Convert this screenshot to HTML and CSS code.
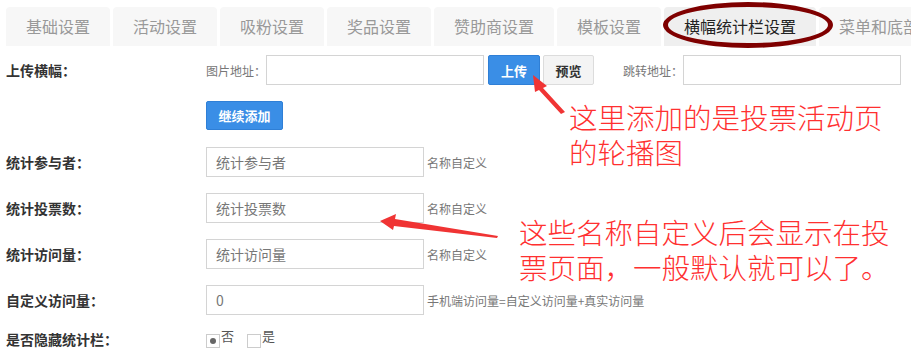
FILE: index.html
```html
<!DOCTYPE html>
<html lang="zh">
<head>
<meta charset="utf-8">
<link rel="stylesheet" href="styles.css">
</head>
<body>
<div class="page">
  <nav class="tabs">
    <div class="tab w104">基础设置</div>
    <div class="tab w104">活动设置</div>
    <div class="tab w104">吸粉设置</div>
    <div class="tab w104">奖品设置</div>
    <div class="tab w120">赞助商设置</div>
    <div class="tab w104">模板设置</div>
    <div class="tab w152 active">横幅统计栏设置</div>
    <div class="tab w120">菜单和底部</div>
  </nav>

  <div class="form">
    <div class="row">
      <div class="label">上传横幅：</div>
      <div class="field">
        <span class="hint-l">图片地址：</span>
        <input class="input" type="text">
        <button class="btn primary">上传</button>
        <button class="btn default">预览</button>
        <span class="hint-l jump">跳转地址：</span>
        <input class="input" type="text">
      </div>
    </div>
    <div class="row">
      <div class="label"></div>
      <div class="field"><button class="btn primary add">继续添加</button></div>
    </div>
    <div class="row">
      <div class="label">统计参与者：</div>
      <div class="field"><input class="input" type="text" value="统计参与者"><span class="hint">名称自定义</span></div>
    </div>
    <div class="row">
      <div class="label">统计投票数：</div>
      <div class="field"><input class="input" type="text" value="统计投票数"><span class="hint">名称自定义</span></div>
    </div>
    <div class="row">
      <div class="label">统计访问量：</div>
      <div class="field"><input class="input" type="text" value="统计访问量"><span class="hint">名称自定义</span></div>
    </div>
    <div class="row">
      <div class="label">自定义访问量：</div>
      <div class="field"><input class="input" type="text" value="0"><span class="hint">手机端访问量=自定义访问量+真实访问量</span></div>
    </div>
    <div class="row last">
      <div class="label">是否隐藏统计栏：</div>
      <div class="field">
        <span class="radio"><span class="dot"></span></span><span class="opt">否</span>
        <span class="radio"></span><span class="opt">是</span>
      </div>
    </div>
  </div>

  <div class="ellipse"></div>
  <svg class="arrows" width="911" height="358" viewBox="0 0 911 358">
    <polygon points="533,75 547,86 543,88 565,112 561,114 539,90 535,92" fill="#f03434"/>
    <polygon points="380,221 396,214 395,219 498,236 497,238 394,226 393,230" fill="#f03434"/>
  </svg>
  <div class="note note1">这里添加的是投票活动页<br>的轮播图</div>
  <div class="note note2">这些名称自定义后会显示在投<br>票页面，一般默认就可以了。</div>
</div>
</body>
</html>
```
FILE: styles.css
```css
* { box-sizing: border-box; }
html, body { margin: 0; padding: 0; background: #fff; }
body {
  width: 911px; height: 358px; overflow: hidden;
  font-family: "Noto Sans CJK SC", "Noto Sans", sans-serif;
  color: #333;
}
.page { position: relative; width: 911px; height: 358px; }

.tabs {
  display: flex; gap: 3px;
  padding: 7px 0 0 6px;
  height: 46px;
  white-space: nowrap;
  overflow: hidden;
}
.tab {
  flex: none;
  height: 39px;
  background: #f7f7f7;
  border-radius: 4px 4px 0 0;
  color: #999;
  font-size: 16px;
  line-height: 39px;
  text-align: center;
}
.w104 { width: 104px; }
.w120 { width: 120px; }
.w152 { width: 152px; }
.tab.active { background: #efefef; color: #222; }

.form { padding: 9px 0 0 6px; }
.row { display: flex; align-items: center; height: 30px; margin-bottom: 16px; }
.row:nth-child(2) { height: 29px; margin-bottom: 17px; }
.row.last { height: 20px; margin-top: -2px; }
.label { width: 200px; flex: none; font-size: 14px; font-weight: bold; color: #333; white-space: nowrap; }
.field { display: flex; align-items: center; height: 100%; white-space: nowrap; }

.hint-l { flex: none; font-size: 12px; color: #777; width: 60px; white-space: nowrap; }
.hint-l.jump { margin-left: 29px; }
.hint { font-size: 12px; color: #777; margin-left: 3px; white-space: nowrap; }

.input {
  flex: none;
  width: 218px; height: 30px;
  border: 1px solid #d4d4d4;
  border-radius: 0;
  padding: 0 9px;
  font-family: inherit;
  font-size: 14px;
  color: #777;
  outline: none;
}

.btn {
  flex: none;
  height: 30px;
  border-radius: 2px;
  font-family: inherit;
  font-size: 13px;
  font-weight: bold;
  padding: 0;
  cursor: pointer;
}
.btn.primary { width: 52px; margin-left: 4px; background: #3a8ee6; border: 1px solid #2f7fd6; color: #fff; }
.btn.default { width: 51px; margin-left: 3px; background: #f4f4f4; border: 1px solid #dcdcdc; color: #333; }
.btn.add { width: 77px; height: 29px; margin-left: 0; }

.radio {
  flex: none;
  width: 14px; height: 14px;
  border: 1px solid #ccc;
  display: inline-flex; align-items: center; justify-content: center;
  margin-top: 4px;
}
.dot { width: 6px; height: 6px; border-radius: 50%; background: #666; }
.opt { font-size: 13px; color: #555; margin-right: 13px; margin-left: 1px; line-height: 1; align-self: flex-start; }

.ellipse {
  position: absolute;
  left: 663px; top: 2px;
  width: 170px; height: 46px;
  border: 5px solid #7f0000;
  border-radius: 50%;
}
.arrows { position: absolute; left: 0; top: 0; pointer-events: none; }
.note {
  position: absolute;
  color: #ff3030;
  font-size: 28.5px;
  line-height: 35px;
  font-weight: 300;
  white-space: nowrap;
}
.note1 { left: 569px; top: 99px; }
.note2 { left: 519px; top: 214px; }
```
